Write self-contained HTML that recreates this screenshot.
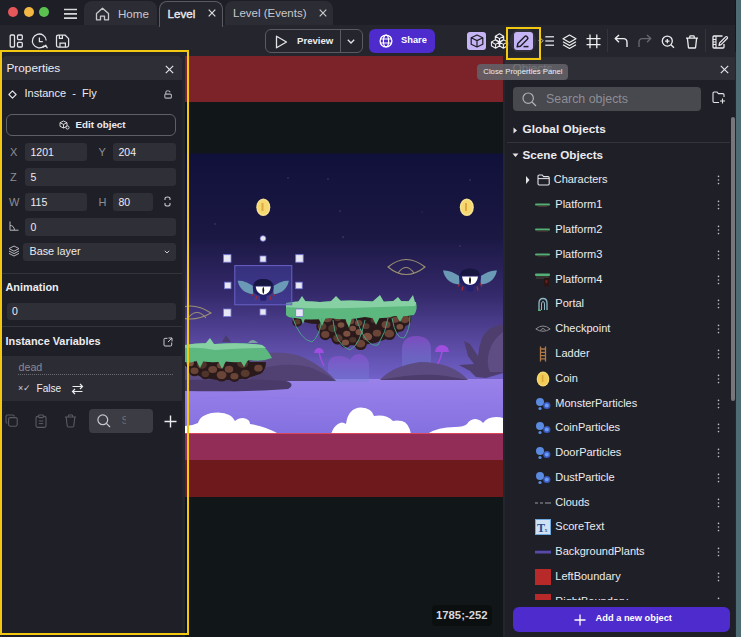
<!DOCTYPE html>
<html><head><meta charset="utf-8">
<style>
*{box-sizing:border-box;margin:0;padding:0}
html,body{width:741px;height:637px;overflow:hidden;background:#1e1e26;font-family:"Liberation Sans",sans-serif;color:#ebebed}
.a{position:absolute}
.t{position:absolute;white-space:pre;line-height:1}
svg{position:absolute;overflow:visible}
</style></head><body>

<!-- tab bar -->
<div class="a" style="left:0;top:0;width:736px;height:25px;background:#1e1e26"></div>
<!-- toolbar -->
<div class="a" style="left:0;top:25px;width:736px;height:32px;background:#25252e"></div>

<!-- traffic lights -->
<div class="a" style="left:8px;top:7px;width:10px;height:10px;border-radius:50%;background:#e5575b"></div>
<div class="a" style="left:23.5px;top:7px;width:10px;height:10px;border-radius:50%;background:#f2b843"></div>
<div class="a" style="left:39px;top:7px;width:10px;height:10px;border-radius:50%;background:#5cc24f"></div>
<!-- hamburger -->
<svg style="left:63px;top:8px" width="15" height="12"><path d="M1 1.5H14M1 5.8H14M1 10.2H14" stroke="#d6d6da" stroke-width="1.7" fill="none"/></svg>
<!-- Home tab -->
<div class="a" style="left:84px;top:1px;width:73px;height:24px;background:#2c2c35;border-radius:8px 8px 0 0"></div>
<svg style="left:95px;top:7px" width="15" height="14" viewBox="0 0 15 14"><path d="M1.5 6.5L7.5 1.2L13.5 6.5V12.8H9.5V9.2H5.5V12.8H1.5Z" stroke="#c8c8cc" stroke-width="1.3" fill="none" stroke-linejoin="round"/></svg>
<div class="t" style="left:118px;top:8px;font-size:11.6px;color:#c8c8cc">Home</div>
<!-- Level tab active -->
<div class="a" style="left:159px;top:1px;width:64px;height:26px;background:#25252e;border:1px solid #5a5a62;border-bottom:none;border-radius:8px 8px 0 0"></div>
<div class="t" style="left:167.5px;top:8px;font-size:11.6px;font-weight:400;-webkit-text-stroke:0.35px #ececef;color:#ececef">Level</div>
<svg style="left:208px;top:9px" width="8" height="8"><path d="M0.7 0.7L7.3 7.3M7.3 0.7L0.7 7.3" stroke="#e0e0e4" stroke-width="1.2"/></svg>
<!-- Level (Events) tab -->
<div class="a" style="left:225px;top:1px;width:108px;height:24px;background:#2c2c35;border-radius:8px 8px 0 0"></div>
<div class="t" style="left:233px;top:8px;font-size:11.5px;color:#c8c8cc">Level (Events)</div>
<svg style="left:318.5px;top:9px" width="8" height="8"><path d="M0.7 0.7L7.3 7.3M7.3 0.7L0.7 7.3" stroke="#c8c8cc" stroke-width="1.2"/></svg>


<!-- left toolbar icons -->
<svg style="left:9px;top:34px" width="15" height="14" viewBox="0 0 15 14"><rect x="1.2" y="1" width="4.3" height="12" rx="1" stroke="#e4e4e8" stroke-width="1.3" fill="none"/><rect x="8.5" y="1" width="4.8" height="4.6" rx="1" stroke="#e4e4e8" stroke-width="1.3" fill="none"/><rect x="8.5" y="8.4" width="4.8" height="4.6" rx="1" stroke="#e4e4e8" stroke-width="1.3" fill="none"/></svg>
<svg style="left:31px;top:32.5px" width="18" height="17" viewBox="0 0 18 17"><path d="M15.2 7.5A6.9 6.9 0 1 0 13.2 12.8" stroke="#e4e4e8" stroke-width="1.25" fill="none"/><path d="M8.4 4.5V8.6H11.8" stroke="#e4e4e8" stroke-width="1.25" fill="none"/><path d="M11.8 14.6L14.8 12.2L16.4 15.2" stroke="#e4e4e8" stroke-width="1.25" fill="none" stroke-linejoin="round"/></svg>
<svg style="left:55px;top:34px" width="15" height="14" viewBox="0 0 15 14"><path d="M1.5 2.8Q1.5 1 3.3 1H10L13.6 4.6V11.2Q13.6 13 11.8 13H3.3Q1.5 13 1.5 11.2Z" stroke="#e4e4e8" stroke-width="1.25" fill="none" stroke-linejoin="round"/><path d="M4.4 1.3V4.4H7.4V1.3" stroke="#e4e4e8" stroke-width="1.2" fill="none"/><path d="M5 13V9.2H10.4V13" stroke="#e4e4e8" stroke-width="1.2" fill="none"/></svg>

<!-- preview button -->
<div class="a" style="left:264.5px;top:28.5px;width:98px;height:24.5px;border:1px solid #5a5a62;border-radius:6px"></div>
<div class="a" style="left:339.5px;top:29px;width:1px;height:24px;background:#5a5a62"></div>
<svg style="left:275px;top:34.5px" width="13" height="14" viewBox="0 0 13 14"><path d="M1.5 1.2L11.5 7L1.5 12.8Z" stroke="#e4e4e8" stroke-width="1.3" fill="none" stroke-linejoin="round"/></svg>
<div class="t" style="left:297px;top:36.3px;font-size:9.6px;font-weight:700;color:#ececef">Preview</div>
<svg style="left:347px;top:39px" width="8" height="5"><path d="M0.8 0.8L4 4L7.2 0.8" stroke="#e4e4e8" stroke-width="1.3" fill="none"/></svg>

<!-- share button -->
<div class="a" style="left:369px;top:29px;width:66px;height:24px;background:#4d2bcc;border-radius:6px"></div>
<svg style="left:378.5px;top:34px" width="14" height="14" viewBox="0 0 14 14"><circle cx="7" cy="7" r="5.9" stroke="#fff" stroke-width="1.3" fill="none"/><ellipse cx="7" cy="7" rx="2.6" ry="5.9" stroke="#fff" stroke-width="1.2" fill="none"/><path d="M1.2 5H12.8M1.2 9H12.8" stroke="#fff" stroke-width="1.1"/></svg>
<div class="t" style="left:401px;top:36.3px;font-size:9.3px;font-weight:700;color:#fff">Share</div>

<!-- right toolbar -->
<div class="a" style="left:467px;top:31.5px;width:19px;height:18.5px;background:#c6b5f5;border-radius:3px"></div>
<svg style="left:469.5px;top:34px" width="14" height="14" viewBox="0 0 14 14"><path d="M7 1L12.8 3.8V10.2L7 13L1.2 10.2V3.8Z M1.2 3.8L7 6.6L12.8 3.8 M7 6.6V13" stroke="#1e1e26" stroke-width="1.2" fill="none" stroke-linejoin="round"/></svg>
<svg style="left:490.5px;top:33px" width="17" height="16" viewBox="0 0 17 16"><path d="M8.5 0.8L12.7 3.2V7.0L8.5 9.4L4.3 7.0V3.2Z M4.3 3.2L8.5 5.6L12.7 3.2 M8.5 5.6V9.4 M4.6 6.6L8.8 9.0V12.799999999999999L4.6 15.2L0.39999999999999947 12.799999999999999V9.0Z M0.39999999999999947 9.0L4.6 11.399999999999999L8.8 9.0 M4.6 11.399999999999999V15.2 M12.4 6.6L16.6 9.0V12.799999999999999L12.4 15.2L8.2 12.799999999999999V9.0Z M8.2 9.0L12.4 11.399999999999999L16.6 9.0 M12.4 11.399999999999999V15.2" stroke="#f0f0f2" stroke-width="1.05" fill="none" stroke-linejoin="round"/></svg>
<div class="a" style="left:510px;top:28px;width:26px;height:26px;border-radius:50%;background:#34343d;opacity:.8"></div>
<div class="a" style="left:513.5px;top:31.5px;width:19px;height:18.5px;background:#c6b5f5;border-radius:3px"></div>
<svg style="left:516px;top:35px" width="14" height="13" viewBox="0 0 14 13"><path d="M1.2 11.8L1.8 8.6L8.8 1.6Q9.8 0.6 10.8 1.6L11.4 2.2Q12.4 3.2 11.4 4.2L4.4 11.2Z" stroke="#1e1e26" stroke-width="1.4" fill="none" stroke-linejoin="round"/><path d="M7.5 11.6H12.5" stroke="#1e1e26" stroke-width="1.5"/></svg>
<svg style="left:538px;top:35px" width="17" height="12" viewBox="0 0 17 12"><path d="M3 3.7L5 5.7L3 7.7L1 5.7Z" stroke="#d0d0d4" stroke-width="1" fill="none"/><path d="M7.3 1.8H16M7.3 5.9H16M7.3 10.2H16" stroke="#c8c8cc" stroke-width="1.5"/></svg>
<svg style="left:562px;top:33.5px" width="15" height="15" viewBox="0 0 15 15"><path d="M7.5 1L14 4.7L7.5 8.4L1 4.7Z" stroke="#f0f0f2" stroke-width="1.2" fill="none" stroke-linejoin="round"/><path d="M1 7.8L7.5 11.5L14 7.8M1 10.8L7.5 14.5L14 10.8" stroke="#f0f0f2" stroke-width="1.2" fill="none" stroke-linejoin="round"/></svg>
<svg style="left:585.5px;top:33.5px" width="15" height="15" viewBox="0 0 15 15"><path d="M4 0.5V14.3M10.8 0.5V14.3M0.5 4.6H14.5M0.5 10.6H14.5" stroke="#f0f0f2" stroke-width="1.3"/></svg>
<div class="a" style="left:606.5px;top:29px;width:1px;height:24px;background:#34343d"></div>
<svg style="left:614px;top:34px" width="15" height="14" viewBox="0 0 15 14"><path d="M5 1L1.2 4.6L5 8.2M1.5 4.6H9.5Q13 4.6 13 8.5V13" stroke="#ececef" stroke-width="1.4" fill="none" stroke-linejoin="round"/></svg>
<svg style="left:637px;top:34px" width="15" height="14" viewBox="0 0 15 14"><path d="M10 1L13.8 4.6L10 8.2M13.5 4.6H5.5Q2 4.6 2 8.5V13" stroke="#66666c" stroke-width="1.4" fill="none" stroke-linejoin="round"/></svg>
<svg style="left:661px;top:34.5px" width="14" height="14" viewBox="0 0 14 14"><circle cx="6.3" cy="6.1" r="5" stroke="#ececef" stroke-width="1.3" fill="none"/><path d="M9.9 9.7L13 12.8M6.3 3.9V8.3M4.1 6.1H8.5" stroke="#ececef" stroke-width="1.3"/></svg>
<svg style="left:684.5px;top:34.5px" width="14" height="14" viewBox="0 0 14 14"><path d="M1 3.2H13M4.8 3V1.6Q4.8 0.8 5.6 0.8H8.4Q9.2 0.8 9.2 1.6V3M2.4 3.4L3.4 12.3Q3.5 13 4.2 13H9.8Q10.5 13 10.6 12.3L11.6 3.4" stroke="#ececef" stroke-width="1.3" fill="none" stroke-linejoin="round"/></svg>
<div class="a" style="left:705px;top:29px;width:1px;height:24px;background:#34343d"></div>
<svg style="left:712px;top:34.5px" width="17" height="14" viewBox="0 0 17 14"><path d="M10.5 1H2Q1 1 1 2V12Q1 13 2 13H11Q12 13 12 12V9" stroke="#ececef" stroke-width="1.3" fill="none"/><path d="M4 1V13M1 4.5H4M1 7H4M1 9.5H4" stroke="#ececef" stroke-width="1.1"/><path d="M7 10.5L7.5 8L13.6 1.9Q14.4 1.1 15.2 1.9Q16 2.7 15.2 3.5L9.1 9.6Z" stroke="#ececef" stroke-width="1.2" fill="none" stroke-linejoin="round"/></svg>

<!-- teal strip -->
<div class="a" style="left:735px;top:0;width:1px;height:637px;background:#17171d"></div>
<div class="a" style="left:736px;top:0;width:5px;height:637px;background:#4e6a73"></div>

<!-- LEFT PANEL -->
<div class="a" style="left:0;top:52px;width:187px;height:585px;background:#25252e"></div>
<div class="a" style="left:2px;top:56px;width:180px;height:581px;background:#1f1f28"></div>
<div class="a" style="left:2px;top:56px;width:180px;height:23.5px;background:#2e2e37;border-radius:4px 4px 0 0"></div>
<div class="t" style="left:6.5px;top:62.5px;font-size:11.8px;color:#ececef">Properties</div>
<svg style="left:165px;top:64.5px" width="9" height="9"><path d="M0.8 0.8L8.2 8.2M8.2 0.8L0.8 8.2" stroke="#e4e4e8" stroke-width="1.2"/></svg>

<svg style="left:7.5px;top:89.5px" width="9" height="9" viewBox="0 0 9 9"><path d="M4.5 0.9L8.1 4.5L4.5 8.1L0.9 4.5Z" stroke="#e4e4e8" stroke-width="1.1" fill="none" stroke-linejoin="round"/></svg>
<div class="t" style="left:24.5px;top:88px;font-size:11px;color:#ececef">Instance  -  Fly</div>
<svg style="left:163.5px;top:89.5px" width="9" height="9" viewBox="0 0 9 9"><path d="M1.8 4V2.6Q1.8 0.8 3.8 0.8Q5.6 0.8 6.2 2.2" stroke="#b0b0b5" stroke-width="1.1" fill="none"/><rect x="0.8" y="4.1" width="6.6" height="4" rx="1" stroke="#b0b0b5" stroke-width="1.1" fill="none"/></svg>

<div class="a" style="left:6px;top:113.5px;width:170px;height:22.5px;border:1px solid #5f5f67;border-radius:6px"></div>
<svg style="left:58.5px;top:120px" width="11" height="10" viewBox="0 0 11 10"><path d="M4.5 1L8 2.7V6.3L4.5 8L1 6.3V2.7Z M1 2.7L4.5 4.4L8 2.7 M4.5 4.4V8" stroke="#e4e4e8" stroke-width="0.9" fill="none"/><circle cx="8.5" cy="7.5" r="1.6" stroke="#e4e4e8" stroke-width="0.9" fill="#1f1f28"/></svg>
<div class="t" style="left:75.5px;top:120px;font-size:9.8px;font-weight:700;color:#ececef">Edit object</div>

<!-- fields -->
<div class="t" style="left:10px;top:147px;font-size:11px;color:#8e8e94">X</div>
<div class="a" style="left:25px;top:143px;width:62px;height:17.5px;background:#2f2f38;border-radius:3px"></div>
<div class="t" style="left:30.5px;top:146.5px;font-size:10.5px;color:#ececef">1201</div>
<div class="t" style="left:98.5px;top:147px;font-size:11px;color:#8e8e94">Y</div>
<div class="a" style="left:112.5px;top:143px;width:63px;height:17.5px;background:#2f2f38;border-radius:3px"></div>
<div class="t" style="left:118.5px;top:146.5px;font-size:10.5px;color:#ececef">204</div>

<div class="t" style="left:10px;top:172px;font-size:11px;color:#8e8e94">Z</div>
<div class="a" style="left:25px;top:168px;width:150.5px;height:17.5px;background:#2f2f38;border-radius:3px"></div>
<div class="t" style="left:30.5px;top:171.5px;font-size:10.5px;color:#ececef">5</div>

<div class="t" style="left:9px;top:197px;font-size:11px;color:#8e8e94">W</div>
<div class="a" style="left:25px;top:193px;width:62px;height:17.5px;background:#2f2f38;border-radius:3px"></div>
<div class="t" style="left:30.5px;top:196.5px;font-size:10.5px;color:#ececef">115</div>
<div class="t" style="left:98.5px;top:197px;font-size:11px;color:#8e8e94">H</div>
<div class="a" style="left:112.5px;top:193px;width:40.5px;height:17.5px;background:#2f2f38;border-radius:3px"></div>
<div class="t" style="left:118.5px;top:196.5px;font-size:10.5px;color:#ececef">80</div>
<svg style="left:164px;top:196px" width="7" height="11" viewBox="0 0 7 11"><path d="M1 4V2.5Q1 1 3.5 1Q6 1 6 2.5V4M1 7V8.5Q1 10 3.5 10Q6 10 6 8.5V7" stroke="#c8c8cc" stroke-width="1.1" fill="none"/></svg>

<svg style="left:9px;top:221px" width="10" height="10" viewBox="0 0 10 10"><path d="M1 0.5V9.2H9.5M1 4.5Q5 4.5 5.5 9.2" stroke="#b8b8bd" stroke-width="1" fill="none"/></svg>
<div class="a" style="left:25px;top:218px;width:150.5px;height:17.5px;background:#2f2f38;border-radius:3px"></div>
<div class="t" style="left:30.5px;top:221.5px;font-size:10.5px;color:#ececef">0</div>

<svg style="left:7.5px;top:245px" width="12" height="12" viewBox="0 0 12 12"><path d="M6 1L11 3.6L6 6.2L1 3.6Z" stroke="#b8b8bd" stroke-width="1" fill="none" stroke-linejoin="round"/><path d="M1 6L6 8.6L11 6M1 8.4L6 11L11 8.4" stroke="#b8b8bd" stroke-width="1" fill="none" stroke-linejoin="round"/></svg>
<div class="a" style="left:23px;top:242.5px;width:152.5px;height:18px;background:#2f2f38;border-radius:3px"></div>
<div class="t" style="left:29.5px;top:246px;font-size:10.8px;color:#ececef">Base layer</div>
<svg style="left:163.5px;top:250px" width="6" height="4"><path d="M0.8 0.8L3 3L5.2 0.8" stroke="#c8c8cc" stroke-width="1" fill="none"/></svg>

<div class="a" style="left:2px;top:272.5px;width:180px;height:1px;background:#34343d"></div>
<div class="t" style="left:5.5px;top:282px;font-size:10.9px;font-weight:700;color:#ececef">Animation</div>
<div class="a" style="left:6.5px;top:302.5px;width:169px;height:17.5px;background:#2f2f38;border-radius:3px"></div>
<div class="t" style="left:12px;top:305.5px;font-size:10.5px;color:#ececef">0</div>
<div class="a" style="left:2px;top:326px;width:180px;height:1px;background:#34343d"></div>
<div class="t" style="left:5.5px;top:336px;font-size:10.9px;font-weight:700;color:#ececef">Instance Variables</div>
<svg style="left:162.5px;top:336.5px" width="10" height="10" viewBox="0 0 10 10"><path d="M4.5 1.3H2Q1 1.3 1 2.3V8Q1 9 2 9H7.7Q8.7 9 8.7 8V5.5M5.5 1H9V4.5M9 1L5 5" stroke="#c8c8cc" stroke-width="1" fill="none"/></svg>

<div class="a" style="left:2px;top:355.5px;width:180px;height:45.5px;background:#2c2c35"></div>
<div class="t" style="left:18.5px;top:361.5px;font-size:10.7px;color:#8a8a90">dead</div>
<div class="a" style="left:18px;top:373.5px;width:155px;height:0;border-top:1px dotted #6a6a70"></div>
<div class="t" style="left:18px;top:384px;font-size:9px;color:#d0d0d4">×✓</div>
<div class="t" style="left:36.5px;top:383.5px;font-size:10.1px;color:#ececef">False</div>
<svg style="left:71px;top:383px" width="13" height="12" viewBox="0 0 13 12"><path d="M1.5 3.5H11.5M9 1L11.5 3.5L9 6M11.5 8.5H1.5M4 6L1.5 8.5L4 11" stroke="#ececef" stroke-width="1.2" fill="none"/></svg>

<!-- bottom toolbar -->
<svg style="left:5px;top:414px" width="13" height="13" viewBox="0 0 13 13"><rect x="3.6" y="3.6" width="8.6" height="8.6" rx="1.6" stroke="#5a5a62" stroke-width="1.1" fill="none"/><path d="M2.4 9.2Q1 9.2 1 7.8V2.4Q1 1 2.4 1H7.8Q9.2 1 9.2 2.4" stroke="#5a5a62" stroke-width="1.1" fill="none"/></svg>
<svg style="left:35px;top:413.5px" width="12" height="14" viewBox="0 0 12 14"><rect x="1" y="2.4" width="10" height="11" rx="1.6" stroke="#5a5a62" stroke-width="1.1" fill="none"/><rect x="3.6" y="1" width="4.8" height="2.6" rx="0.8" stroke="#5a5a62" stroke-width="1.1" fill="#1f1f28"/><path d="M3.8 7H8.2M3.8 9.6H8.2" stroke="#5a5a62" stroke-width="1"/></svg>
<svg style="left:64px;top:413.5px" width="13" height="14" viewBox="0 0 13 14"><path d="M1 3H12M4.4 2.8V1.8Q4.4 1 5.2 1H7.8Q8.6 1 8.6 1.8V2.8M2.2 3.4L3.2 12Q3.3 13 4.2 13H8.8Q9.7 13 9.8 12L10.8 3.4" stroke="#5a5a62" stroke-width="1.1" fill="none"/></svg>
<div class="a" style="left:88.5px;top:408.5px;width:64px;height:24.5px;background:#3c3c45;border-radius:4px"></div>
<svg style="left:97px;top:414px" width="14" height="14" viewBox="0 0 14 14"><circle cx="5.8" cy="5.8" r="4.9" stroke="#c8c8cc" stroke-width="1.2" fill="none"/><path d="M9.4 9.4L13 13" stroke="#c8c8cc" stroke-width="1.2"/></svg>
<div class="a" style="left:121.5px;top:414.5px;width:4px;height:12px;overflow:hidden"><div class="t" style="left:0;top:0;font-size:11px;color:#6e6e74">S</div></div>
<svg style="left:164px;top:414.5px" width="13" height="13"><path d="M6.5 0.5V12.5M0.5 6.5H12.5" stroke="#ececef" stroke-width="1.4"/></svg>

<!-- CANVAS -->
<div class="a" style="left:185px;top:56px;width:318px;height:581px;background:#111719;overflow:hidden">
<svg style="left:0;top:0" width="318" height="581" viewBox="185 56 318 581">
<defs>
<linearGradient id="sky" x1="0" y1="153.5" x2="0" y2="434" gradientUnits="userSpaceOnUse">
<stop offset="0" stop-color="#10113a"/>
<stop offset="0.3" stop-color="#1b1844"/>
<stop offset="0.5" stop-color="#34296a"/>
<stop offset="0.68" stop-color="#5a4aa2"/>
<stop offset="0.8" stop-color="#7060c8"/>
<stop offset="1" stop-color="#8272e4"/>
</linearGradient>
<radialGradient id="mush" cx="0.5" cy="0.4" r="0.6"><stop offset="0" stop-color="#9a6ae8" stop-opacity=".9"/><stop offset="1" stop-color="#7a5ad0" stop-opacity=".5"/></radialGradient>
</defs>
<rect x="185" y="56" width="318" height="46" fill="#7b2329"/>
<rect x="185" y="153.5" width="318" height="281" fill="url(#sky)"/>
<!-- stars -->
<g fill="#4a4a7a"><circle cx="288" cy="178" r=".7"/><circle cx="328" cy="179" r=".7"/><circle cx="340" cy="211" r=".7"/><circle cx="215" cy="224" r=".7"/><circle cx="343" cy="237" r=".8"/><circle cx="460" cy="246" r=".7"/><circle cx="470" cy="180" r=".7"/><circle cx="422" cy="212" r=".6"/></g>
<linearGradient id="gnd" x1="0" y1="0" x2="0" y2="1"><stop offset="0" stop-color="#9a82ea"/><stop offset="1" stop-color="#8470e0"/></linearGradient>
<rect x="185" y="379" width="318" height="55" fill="url(#gnd)"/>
<!-- mushrooms glow -->
<linearGradient id="dome" x1="0" y1="0" x2="0" y2="1"><stop offset="0" stop-color="#a452e2"/><stop offset=".35" stop-color="#8a68dc"/><stop offset="1" stop-color="#6e86d2" stop-opacity=".7"/></linearGradient>
<path d="M402 366V350Q402 336 416 336Q431 336 431 350V366Z" fill="url(#dome)" opacity=".5"/>
<path d="M435 352Q436 345 442 345Q449 346 449 352Z" fill="#a04ee0"/><path d="M442 351Q441 360 436 366" stroke="#a04ee0" stroke-width="1.6" fill="none"/>
<path d="M328 382V366Q328 356 338 356Q346 356 350 360Q354 353 360 354Q369 356 369 366V382Z" fill="url(#dome)" opacity=".45"/>
<path d="M314 353Q315 348 319 348Q323 348 324 353Z" fill="#a04ee0"/><path d="M319 352Q320 358 324 366" stroke="#a04ee0" stroke-width="1.5" fill="none"/>
<!-- hills -->
<path d="M185 381V368Q220 356 262 353Q290 351 305 358Q325 368 336 381Z" fill="#5c4b80"/>
<path d="M250 372Q285 360 312 368Q328 375 336 381H250Z" fill="#514173"/>
<path d="M185 380Q240 378 286 381Q296 384 288 389Q250 392 185 391Z" fill="#4a3a6a"/>
<path d="M380 380Q392 366 420 362Q452 362 468 380Z" fill="#5c4b80"/>
<path d="M380 380Q420 372 446 376Q458 378 468 380Z" fill="#4c3c6c"/>
<path d="M503 324Q488 326 482 338Q479 346 478 356L470 344L464 341L468 356L474 364L459 365L470 371L476 377L486 378L503 373Z" fill="#4e3e6e"/>
<path d="M503 332Q492 340 489 352Q486 364 490 372H503Z" fill="#5e4d82"/>
<!-- lower ground -->

<path d="M200 398Q260 395 320 400M360 405Q420 400 490 404M210 415Q300 412 380 418" stroke="#8c7ce8" stroke-width="1" fill="none" opacity=".6"/>
<!-- clouds -->
<g fill="#ffffff">
<path d="M185 434V426Q192 426 198 423Q201 413 218 412.5Q232 413 235 421Q238 418 243 418Q250 419 250 424Q265 426 279 434Z"/>
<path d="M331 434Q334 426 338 424Q342 421 346 424Q348 408 361 407.5Q372 408 374 416Q386 414 393 421Q396 420 402 421Q409 423 411 434Z"/>
<path d="M427 434Q438 427 455 427Q464 427 467 424Q470 419 476 419Q481 420 483 423Q487 417 496 417Q501 417 503 418V434Z"/>
</g>
<rect x="185" y="433" width="318" height="1.2" fill="#d9475a"/>
<rect x="185" y="434" width="318" height="26" fill="#912d57"/>
<rect x="185" y="460" width="318" height="37" fill="#6e1a1d"/>
<!-- checkpoint eyes -->
<path d="M388 267Q406 252 425 267Q406 282 388 267Z" stroke="#9a9070" stroke-width="1.1" fill="none"/>
<path d="M398 273Q406 262 414 273" stroke="#9a9070" stroke-width="1.1" fill="none"/>
<path d="M170 313Q190 299 211 313Q190 325 170 313Z" stroke="#9a9070" stroke-width="1.1" fill="none"/>
<path d="M188 318Q197 307 206 318" stroke="#9a9070" stroke-width="1.1" fill="none"/>
<!-- left platform -->
<path d="M189 362H266Q266 370 260 374Q244 380 225 380Q205 380 195 374Q189 370 189 362Z" fill="#2a1a1c"/>
<g fill="#2a1a1c"><circle cx="212.7" cy="369.5" r="6.0"/><circle cx="201.8" cy="364.6" r="6.7"/><circle cx="229.0" cy="369.2" r="5.9"/><circle cx="242.7" cy="363.4" r="7.1"/><circle cx="258.4" cy="368.2" r="5.8"/><circle cx="245.2" cy="373.3" r="6.0"/><circle cx="190.1" cy="363.2" r="5.4"/><circle cx="221.6" cy="375.1" r="6.5"/><circle cx="220.6" cy="365.4" r="5.3"/><circle cx="234.4" cy="376.3" r="5.6"/><circle cx="205.3" cy="373.9" r="5.4"/><circle cx="194.5" cy="370.7" r="5.6"/></g><g><ellipse cx="212.7" cy="369.5" rx="4.4" ry="3.6" fill="#6a4436"/><ellipse cx="201.8" cy="364.6" rx="5.1" ry="4.2" fill="#4e342a"/><ellipse cx="229.0" cy="369.2" rx="4.3" ry="3.5" fill="#6a4436"/><ellipse cx="242.7" cy="363.4" rx="5.5" ry="4.5" fill="#4e342a"/><ellipse cx="258.4" cy="368.2" rx="4.2" ry="3.4" fill="#6a4436"/><ellipse cx="245.2" cy="373.3" rx="4.4" ry="3.6" fill="#583a2e"/><ellipse cx="190.1" cy="363.2" rx="3.8" ry="3.1" fill="#7a5040"/><ellipse cx="221.6" cy="375.1" rx="4.9" ry="4.0" fill="#6a4436"/><ellipse cx="220.6" cy="365.4" rx="3.7" ry="3.0" fill="#6a4436"/><ellipse cx="234.4" cy="376.3" rx="4.0" ry="3.2" fill="#6a4436"/><ellipse cx="205.3" cy="373.9" rx="3.8" ry="3.1" fill="#4e342a"/><ellipse cx="194.5" cy="370.7" rx="4.0" ry="3.3" fill="#6a4436"/></g>
<path d="M185 345Q200 342 215 344Q240 342 262 345Q268 350 272 358Q262 362 250 360Q238 364 225 361Q210 364 198 360Q190 364 185 362Z" fill="#5cb87e"/>
<path d="M185 345Q200 342 215 344Q240 342 262 345Q265 347 266 348Q240 348 215 350Q200 347 185 348Z" fill="#86d0a4"/><path d="M205 344L210 338L214 344" fill="#86d0a4"/>
<path d="M196 360L200 368L204 360M218 361L222 369L226 361M240 360L244 367L248 360" fill="#5cb87e"/>
<path d="M222 342L226 335L231 342Z" fill="#4a3d6e"/>
<path d="M248 343Q252 337 258 343Z" fill="#7aa0a0"/>
<!-- floating platform -->
<path d="M292 312L412 312Q412 320 404 328Q392 338 375 343Q360 346 348 345Q335 342 326 335Q321 327 318 324Q305 324 296 318Z" fill="#2a1a1c"/>
<g fill="#2a1a1c"><circle cx="367.4" cy="336.7" r="6.4"/><circle cx="350.0" cy="320.9" r="5.9"/><circle cx="361.9" cy="313.4" r="5.2"/><circle cx="395.5" cy="319.7" r="5.2"/><circle cx="337.8" cy="318.3" r="5.1"/><circle cx="332.7" cy="328.4" r="6.2"/><circle cx="386.0" cy="324.7" r="6.0"/><circle cx="298.0" cy="314.5" r="5.2"/><circle cx="404.9" cy="319.3" r="6.3"/><circle cx="358.6" cy="323.0" r="5.4"/><circle cx="317.1" cy="315.5" r="5.1"/><circle cx="352.8" cy="339.8" r="5.1"/><circle cx="337.8" cy="338.2" r="6.3"/><circle cx="325.3" cy="334.5" r="5.7"/><circle cx="389.3" cy="333.7" r="6.4"/><circle cx="378.4" cy="313.9" r="5.1"/><circle cx="346.8" cy="333.8" r="5.2"/><circle cx="327.2" cy="318.0" r="6.8"/><circle cx="377.0" cy="333.2" r="5.8"/><circle cx="388.7" cy="315.2" r="5.3"/><circle cx="366.0" cy="326.2" r="5.1"/><circle cx="374.0" cy="320.1" r="5.0"/><circle cx="307.6" cy="315.3" r="6.6"/><circle cx="359.3" cy="332.1" r="5.4"/><circle cx="399.8" cy="326.8" r="5.0"/><circle cx="341.0" cy="325.0" r="5.0"/><circle cx="322.1" cy="326.5" r="5.8"/><circle cx="360.6" cy="343.7" r="6.3"/><circle cx="297.2" cy="321.9" r="4.9"/><circle cx="370.5" cy="313.2" r="5.2"/><circle cx="346.3" cy="313.8" r="4.9"/><circle cx="345.4" cy="342.5" r="5.3"/><circle cx="399.1" cy="313.1" r="5.1"/><circle cx="353.8" cy="313.1" r="5.0"/><circle cx="352.7" cy="328.5" r="4.9"/></g><g><ellipse cx="367.4" cy="336.7" rx="4.8" ry="3.9" fill="#7a5040"/><ellipse cx="350.0" cy="320.9" rx="4.3" ry="3.5" fill="#6a4436"/><ellipse cx="361.9" cy="313.4" rx="3.6" ry="3.0" fill="#583a2e"/><ellipse cx="395.5" cy="319.7" rx="3.6" ry="3.0" fill="#6a4436"/><ellipse cx="337.8" cy="318.3" rx="3.5" ry="2.9" fill="#583a2e"/><ellipse cx="332.7" cy="328.4" rx="4.6" ry="3.8" fill="#4e342a"/><ellipse cx="386.0" cy="324.7" rx="4.4" ry="3.6" fill="#6a4436"/><ellipse cx="298.0" cy="314.5" rx="3.6" ry="2.9" fill="#7a5040"/><ellipse cx="404.9" cy="319.3" rx="4.7" ry="3.9" fill="#6a4436"/><ellipse cx="358.6" cy="323.0" rx="3.8" ry="3.1" fill="#6a4436"/><ellipse cx="317.1" cy="315.5" rx="3.5" ry="2.9" fill="#7a5040"/><ellipse cx="352.8" cy="339.8" rx="3.5" ry="2.8" fill="#4e342a"/><ellipse cx="337.8" cy="338.2" rx="4.7" ry="3.9" fill="#583a2e"/><ellipse cx="325.3" cy="334.5" rx="4.1" ry="3.4" fill="#6a4436"/><ellipse cx="389.3" cy="333.7" rx="4.8" ry="3.9" fill="#6a4436"/><ellipse cx="378.4" cy="313.9" rx="3.5" ry="2.9" fill="#583a2e"/><ellipse cx="346.8" cy="333.8" rx="3.6" ry="3.0" fill="#7a5040"/><ellipse cx="327.2" cy="318.0" rx="5.2" ry="4.2" fill="#6a4436"/><ellipse cx="377.0" cy="333.2" rx="4.2" ry="3.4" fill="#6a4436"/><ellipse cx="388.7" cy="315.2" rx="3.7" ry="3.0" fill="#6a4436"/><ellipse cx="366.0" cy="326.2" rx="3.5" ry="2.9" fill="#583a2e"/><ellipse cx="374.0" cy="320.1" rx="3.4" ry="2.8" fill="#4e342a"/><ellipse cx="307.6" cy="315.3" rx="5.0" ry="4.1" fill="#583a2e"/><ellipse cx="359.3" cy="332.1" rx="3.8" ry="3.1" fill="#7a5040"/><ellipse cx="399.8" cy="326.8" rx="3.4" ry="2.8" fill="#7a5040"/><ellipse cx="341.0" cy="325.0" rx="3.4" ry="2.8" fill="#7a5040"/><ellipse cx="322.1" cy="326.5" rx="4.2" ry="3.4" fill="#583a2e"/><ellipse cx="360.6" cy="343.7" rx="4.7" ry="3.9" fill="#6a4436"/><ellipse cx="297.2" cy="321.9" rx="3.3" ry="2.7" fill="#583a2e"/><ellipse cx="370.5" cy="313.2" rx="3.6" ry="3.0" fill="#4e342a"/><ellipse cx="346.3" cy="313.8" rx="3.3" ry="2.7" fill="#6a4436"/><ellipse cx="345.4" cy="342.5" rx="3.7" ry="3.0" fill="#7a5040"/><ellipse cx="399.1" cy="313.1" rx="3.5" ry="2.8" fill="#7a5040"/><ellipse cx="353.8" cy="313.1" rx="3.4" ry="2.8" fill="#4e342a"/><ellipse cx="352.7" cy="328.5" rx="3.3" ry="2.7" fill="#7a5040"/></g>
<path d="M286 303Q300 300 320 302Q350 299 380 302Q400 300 416 302Q418 310 414 315Q404 317 395 316Q380 320 365 317Q345 321 330 318Q310 321 295 318Q288 318 286 315Z" fill="#5cb87e"/>
<path d="M286 303Q300 300 320 302Q350 299 380 302Q400 300 416 302Q416 305 415 306Q380 307 350 308Q310 309 286 307Z" fill="#86d0a4"/><path d="M298 302L302 296L306 302M330 302L336 296L342 302M372 302L380 295L384 302M392 302L398 297L402 302M408 302L413 295L415 302" fill="#86d0a4"/>
<path d="M300 316L303 324L306 316M318 317L322 326L326 317M345 318L349 328L352 318M372 317L376 325L380 317M396 315L400 322L404 315" fill="#5cb87e"/>
<g stroke="#4aa88a" stroke-width="1" fill="none" opacity=".9"><path d="M292 316Q300 340 312 342Q320 336 322 318"/><path d="M333 320Q335 345 350 350Q360 345 365 320"/><path d="M356 318Q366 348 378 345Q386 332 388 318"/><path d="M392 318Q396 340 404 338Q410 330 410 316"/></g>
<!-- coins -->
<g><ellipse cx="263.3" cy="207.2" rx="7" ry="8.8" fill="#f8e18e"/><ellipse cx="263.3" cy="207.2" rx="5.5" ry="7.2" fill="#f5d870"/><rect x="261.5" y="203" width="2" height="8" fill="#e0a840"/></g>
<g><ellipse cx="466.8" cy="207.2" rx="7" ry="8.8" fill="#f8e18e"/><ellipse cx="466.8" cy="207.2" rx="5.5" ry="7.2" fill="#f5d870"/><rect x="465" y="203" width="2" height="8" fill="#e0a840"/></g>
<!-- right monster -->
<g transform="translate(470 277.5) scale(1.0)">
<path d="M-10 -1Q-20 -8 -27 -7Q-24 6 -11 7Z" fill="#6a9ab6"/><path d="M10 -1Q20 -8 27 -7Q24 6 11 7Z" fill="#6a9ab6"/>
<path d="M-11 0Q-11 -9 0 -9Q11 -9 11 0Q11 9 0 9Q-11 9 -11 0Z" fill="#221e62"/>
<path d="M-10 -2Q-9 -9 0 -9Q9 -9 10 -2Z" fill="#17163e"/>
<rect x="-3.5" y="7" width="7" height="7" rx="3" fill="#252070"/>
<path d="M-8 -1H8Q7 7 0 7.5Q-7 7 -8 -1Z" fill="#fff"/>
<path d="M0 -1Q-2 3 0 7Q2 3 0 -1Z" fill="#111"/>
<path d="M-10 6L-12 9M-7 9L-8 13M10 6L12 9M7 9L8 13" stroke="#a62a3a" stroke-width="1.2"/>
</g>

<!-- selection -->
<rect x="234.8" y="265.6" width="57" height="39.2" fill="#4a48b0" fill-opacity=".45" stroke="#6a62c8" stroke-width="1"/>
<g transform="translate(263.3 287.5) scale(0.95)">
<path d="M-10 -1Q-20 -8 -27 -7Q-24 6 -11 7Z" fill="#6a9ab6"/><path d="M10 -1Q20 -8 27 -7Q24 6 11 7Z" fill="#6a9ab6"/>
<path d="M-11 0Q-11 -9 0 -9Q11 -9 11 0Q11 9 0 9Q-11 9 -11 0Z" fill="#221e62"/>
<path d="M-10 -2Q-9 -9 0 -9Q9 -9 10 -2Z" fill="#17163e"/>
<rect x="-3.5" y="7" width="7" height="7" rx="3" fill="#252070"/>
<path d="M-8 -1H8Q7 7 0 7.5Q-7 7 -8 -1Z" fill="#fff"/>
<path d="M0 -1Q-2 3 0 7Q2 3 0 -1Z" fill="#111"/>
<path d="M-10 6L-12 9M-7 9L-8 13M10 6L12 9M7 9L8 13" stroke="#a62a3a" stroke-width="1.2"/>
</g>
<g fill="#e8e8f4" stroke="#7a7ad8" stroke-width=".8">
<circle cx="263" cy="238.5" r="2.8"/>
<rect x="223.5" y="254.7" width="7.5" height="7.5"/><rect x="260" y="256" width="6" height="6"/><rect x="295.7" y="254.7" width="7.5" height="7.5"/>
<rect x="224.5" y="282.2" width="6.5" height="6.5"/><rect x="295.7" y="282.2" width="6.5" height="6.5"/>
<rect x="223.5" y="309" width="7.5" height="7.5"/><rect x="260" y="309" width="6" height="6"/><rect x="295.7" y="309" width="7.5" height="7.5"/>
</g>
</svg>
<div class="a" style="left:246.7px;top:549px;width:60px;height:21px;background:#0c0f10;border-radius:4px"></div>
<div class="t" style="left:251px;top:553.5px;font-size:11.3px;font-weight:700;color:#d8d8dc">1785;-252</div>
</div>

<!-- RIGHT PANEL -->
<div class="a" style="left:503px;top:52px;width:233px;height:585px;background:#25252e"></div>
<div class="a" style="left:504.5px;top:57px;width:230.5px;height:580px;background:#1f1f28"></div>
<div class="a" style="left:504.5px;top:57px;width:230.5px;height:22.5px;background:#2e2e37;border-radius:3px 1px 0 0"></div>
<div class="t" style="left:512.5px;top:63px;font-size:11.8px;color:#ececef">Objects</div>
<svg style="left:719.5px;top:65px" width="9" height="9"><path d="M0.8 0.8L8.2 8.2M8.2 0.8L0.8 8.2" stroke="#e4e4e8" stroke-width="1.2"/></svg>
<div class="a" style="left:513px;top:86.5px;width:187.5px;height:24.5px;background:#48484f;border-radius:4px"></div>
<svg style="left:521.5px;top:91.5px" width="15" height="15" viewBox="0 0 15 15"><circle cx="6.2" cy="6.2" r="5.2" stroke="#b0b0b5" stroke-width="1.2" fill="none"/><path d="M10 10L14 14" stroke="#b0b0b5" stroke-width="1.2"/></svg>
<div class="t" style="left:546px;top:92.5px;font-size:12.4px;color:#8e8e94">Search objects</div>
<svg style="left:712px;top:91px" width="14" height="13" viewBox="0 0 14 13"><path d="M7 11.5H2.2Q1 11.5 1 10.3V2.2Q1 1 2.2 1H5L6.4 2.6H10.8Q12 2.6 12 3.8V6" stroke="#e4e4e8" stroke-width="1.1" fill="none"/><path d="M10.5 7.5V12.5M8 10H13" stroke="#e4e4e8" stroke-width="1.1"/></svg>

<svg style="left:512.5px;top:126.5px" width="5" height="7"><path d="M0.5 0.5L4 3.5L0.5 6.5Z" fill="#e4e4e8"/></svg>
<div class="t" style="left:522.5px;top:124px;font-size:11.8px;font-weight:700;color:#ececef">Global Objects</div>
<div class="a" style="left:506.5px;top:142px;width:223px;height:1px;background:#34343d"></div>
<svg style="left:511.5px;top:153px" width="7" height="5"><path d="M0.5 0.5H6.5L3.5 4Z" fill="#e4e4e8"/></svg>
<div class="t" style="left:522.5px;top:149px;font-size:11.7px;font-weight:700;color:#ececef">Scene Objects</div>
<div class="a" style="left:731px;top:117px;width:4px;height:283.5px;background:#76767b;border-radius:2px"></div>
<div class="a" style="left:505px;top:169px;width:226px;height:431px;overflow:hidden">
<svg style="left:19.5px;top:5.3px" width="26" height="12" viewBox="0 0 26 12"><path d="M1 2L4.5 6L1 10Z" fill="#e4e4e8"/><path d="M13 2.2Q13 1 14.2 1H17.2L18.6 2.6H23Q24.2 2.6 24.2 3.8V9.8Q24.2 11 23 11H14.2Q13 11 13 9.8Z" stroke="#e4e4e8" stroke-width="1.1" fill="none"/><path d="M13 4.6H24.2" stroke="#e4e4e8" stroke-width="1"/></svg>
<div class="t" style="left:48.7px;top:5.3px;font-size:11px;color:#ececef">Characters</div>
<svg style="left:211.7px;top:6.3px" width="3" height="10"><circle cx="1.5" cy="1.4" r="0.8" fill="#c0c0c4"/><circle cx="1.5" cy="5" r="0.8" fill="#c0c0c4"/><circle cx="1.5" cy="8.6" r="0.8" fill="#c0c0c4"/></svg>
<svg style="left:29.0px;top:30.3px" width="17" height="12"><rect x="1" y="4.6" width="15" height="2" rx="1" fill="#52b074"/><rect x="4" y="6.6" width="9" height="1.4" fill="#5a4036" opacity=".7"/></svg>
<div class="t" style="left:50.3px;top:30.3px;font-size:11px;color:#ececef">Platform1</div>
<svg style="left:211.7px;top:31.3px" width="3" height="10"><circle cx="1.5" cy="1.4" r="0.8" fill="#c0c0c4"/><circle cx="1.5" cy="5" r="0.8" fill="#c0c0c4"/><circle cx="1.5" cy="8.6" r="0.8" fill="#c0c0c4"/></svg>
<svg style="left:29.0px;top:55.1px" width="17" height="12"><rect x="1" y="4.6" width="15" height="1.8" rx="1" fill="#52b074"/><rect x="3" y="6.4" width="11" height="1.6" fill="#4a3630" opacity=".7"/></svg>
<div class="t" style="left:50.3px;top:55.1px;font-size:11px;color:#ececef">Platform2</div>
<svg style="left:211.7px;top:56.1px" width="3" height="10"><circle cx="1.5" cy="1.4" r="0.8" fill="#c0c0c4"/><circle cx="1.5" cy="5" r="0.8" fill="#c0c0c4"/><circle cx="1.5" cy="8.6" r="0.8" fill="#c0c0c4"/></svg>
<svg style="left:29.0px;top:79.9px" width="17" height="12"><rect x="1" y="4.6" width="15" height="2" rx="1" fill="#52b074"/><rect x="4" y="6.6" width="9" height="1.2" fill="#5a4036" opacity=".6"/></svg>
<div class="t" style="left:50.3px;top:79.9px;font-size:11px;color:#ececef">Platform3</div>
<svg style="left:211.7px;top:80.9px" width="3" height="10"><circle cx="1.5" cy="1.4" r="0.8" fill="#c0c0c4"/><circle cx="1.5" cy="5" r="0.8" fill="#c0c0c4"/><circle cx="1.5" cy="8.6" r="0.8" fill="#c0c0c4"/></svg>
<svg style="left:29.0px;top:102.6px" width="17" height="16"><rect x="1" y="1.5" width="15" height="2.5" rx="1" fill="#52b074"/><rect x="2" y="4" width="13" height="3" fill="#3a3a36" opacity=".8"/><rect x="10" y="6" width="5" height="8.5" fill="#2a1414"/><rect x="11.5" y="8" width="2" height="3" fill="#6a2020"/></svg>
<div class="t" style="left:50.3px;top:104.6px;font-size:11px;color:#ececef">Platform4</div>
<svg style="left:211.7px;top:105.6px" width="3" height="10"><circle cx="1.5" cy="1.4" r="0.8" fill="#c0c0c4"/><circle cx="1.5" cy="5" r="0.8" fill="#c0c0c4"/><circle cx="1.5" cy="8.6" r="0.8" fill="#c0c0c4"/></svg>
<svg style="left:32.0px;top:128.4px" width="12" height="14" viewBox="0 0 12 14"><path d="M2 13V6Q2 1.5 6 1.5Q10 1.5 10 6V13" stroke="#8fb8c4" stroke-width="1.3" fill="none"/><path d="M4.5 13V7Q4.5 4.5 6 4.5Q7.5 4.5 7.5 7V13" stroke="#8fb8c4" stroke-width="1" fill="none"/><path d="M1 13.3H4" stroke="#5fc080" stroke-width="1.2"/></svg>
<div class="t" style="left:50.3px;top:129.4px;font-size:11px;color:#ececef">Portal</div>
<svg style="left:211.7px;top:130.4px" width="3" height="10"><circle cx="1.5" cy="1.4" r="0.8" fill="#c0c0c4"/><circle cx="1.5" cy="5" r="0.8" fill="#c0c0c4"/><circle cx="1.5" cy="8.6" r="0.8" fill="#c0c0c4"/></svg>
<svg style="left:30.0px;top:155.2px" width="16" height="10" viewBox="0 0 16 10"><path d="M0.8 5Q8 -1 15.2 5Q8 9.5 0.8 5Z" stroke="#8a8a8e" stroke-width="1" fill="none"/><path d="M5.5 6.5Q8 2.5 10.5 6.5" stroke="#8a8a8e" stroke-width="1" fill="none"/></svg>
<div class="t" style="left:50.3px;top:154.2px;font-size:11px;color:#ececef">Checkpoint</div>
<svg style="left:211.7px;top:155.2px" width="3" height="10"><circle cx="1.5" cy="1.4" r="0.8" fill="#c0c0c4"/><circle cx="1.5" cy="5" r="0.8" fill="#c0c0c4"/><circle cx="1.5" cy="8.6" r="0.8" fill="#c0c0c4"/></svg>
<svg style="left:34.0px;top:177.0px" width="8" height="16" viewBox="0 0 8 16"><path d="M1.5 0.5V15.5M6.5 0.5V15.5M1.5 3H6.5M1.5 6.3H6.5M1.5 9.6H6.5M1.5 12.9H6.5" stroke="#b07a48" stroke-width="1.3"/></svg>
<div class="t" style="left:50.3px;top:179.0px;font-size:11px;color:#ececef">Ladder</div>
<svg style="left:211.7px;top:180.0px" width="3" height="10"><circle cx="1.5" cy="1.4" r="0.8" fill="#c0c0c4"/><circle cx="1.5" cy="5" r="0.8" fill="#c0c0c4"/><circle cx="1.5" cy="8.6" r="0.8" fill="#c0c0c4"/></svg>
<svg style="left:31.0px;top:201.8px" width="14" height="16" viewBox="0 0 14 16"><ellipse cx="7" cy="8" rx="6.3" ry="7.5" fill="#f6d872"/><ellipse cx="7" cy="8" rx="5" ry="6.2" fill="#f3cc57"/><rect x="5.8" y="4" width="1.6" height="7" fill="#d9a838"/></svg>
<div class="t" style="left:50.3px;top:203.8px;font-size:11px;color:#ececef">Coin</div>
<svg style="left:211.7px;top:204.8px" width="3" height="10"><circle cx="1.5" cy="1.4" r="0.8" fill="#c0c0c4"/><circle cx="1.5" cy="5" r="0.8" fill="#c0c0c4"/><circle cx="1.5" cy="8.6" r="0.8" fill="#c0c0c4"/></svg>
<svg style="left:30.0px;top:227.5px" width="16" height="14" viewBox="0 0 16 14"><circle cx="5" cy="5" r="4" fill="#5b8be0"/><circle cx="11.8" cy="8.5" r="3.6" fill="#3a5cc0"/><circle cx="11.8" cy="8.5" r="2" fill="#6a9af0"/><circle cx="5" cy="11.5" r="1.6" fill="#5b8be0"/></svg>
<div class="t" style="left:50.3px;top:228.5px;font-size:11px;color:#ececef">MonsterParticles</div>
<svg style="left:211.7px;top:229.5px" width="3" height="10"><circle cx="1.5" cy="1.4" r="0.8" fill="#c0c0c4"/><circle cx="1.5" cy="5" r="0.8" fill="#c0c0c4"/><circle cx="1.5" cy="8.6" r="0.8" fill="#c0c0c4"/></svg>
<svg style="left:30.0px;top:252.3px" width="16" height="14" viewBox="0 0 16 14"><circle cx="5" cy="5" r="4" fill="#5b8be0"/><circle cx="11.8" cy="8.5" r="3.6" fill="#3a5cc0"/><circle cx="11.8" cy="8.5" r="2" fill="#6a9af0"/><circle cx="5" cy="11.5" r="1.6" fill="#5b8be0"/></svg>
<div class="t" style="left:50.3px;top:253.3px;font-size:11px;color:#ececef">CoinParticles</div>
<svg style="left:211.7px;top:254.3px" width="3" height="10"><circle cx="1.5" cy="1.4" r="0.8" fill="#c0c0c4"/><circle cx="1.5" cy="5" r="0.8" fill="#c0c0c4"/><circle cx="1.5" cy="8.6" r="0.8" fill="#c0c0c4"/></svg>
<svg style="left:30.0px;top:277.1px" width="16" height="14" viewBox="0 0 16 14"><circle cx="5" cy="5" r="4" fill="#5b8be0"/><circle cx="11.8" cy="8.5" r="3.6" fill="#3a5cc0"/><circle cx="11.8" cy="8.5" r="2" fill="#6a9af0"/><circle cx="5" cy="11.5" r="1.6" fill="#5b8be0"/></svg>
<div class="t" style="left:50.3px;top:278.1px;font-size:11px;color:#ececef">DoorParticles</div>
<svg style="left:211.7px;top:279.1px" width="3" height="10"><circle cx="1.5" cy="1.4" r="0.8" fill="#c0c0c4"/><circle cx="1.5" cy="5" r="0.8" fill="#c0c0c4"/><circle cx="1.5" cy="8.6" r="0.8" fill="#c0c0c4"/></svg>
<svg style="left:30.0px;top:301.9px" width="16" height="14" viewBox="0 0 16 14"><circle cx="5" cy="5" r="4" fill="#5b8be0"/><circle cx="11.8" cy="8.5" r="3.6" fill="#3a5cc0"/><circle cx="11.8" cy="8.5" r="2" fill="#6a9af0"/><circle cx="5" cy="11.5" r="1.6" fill="#5b8be0"/></svg>
<div class="t" style="left:50.3px;top:302.9px;font-size:11px;color:#ececef">DustParticle</div>
<svg style="left:211.7px;top:303.9px" width="3" height="10"><circle cx="1.5" cy="1.4" r="0.8" fill="#c0c0c4"/><circle cx="1.5" cy="5" r="0.8" fill="#c0c0c4"/><circle cx="1.5" cy="8.6" r="0.8" fill="#c0c0c4"/></svg>
<svg style="left:30.0px;top:331.7px" width="16" height="4"><path d="M0 2H3M5 2H8M10 2H16" stroke="#9a9aa0" stroke-width="1"/></svg>
<div class="t" style="left:50.3px;top:327.7px;font-size:11px;color:#ececef">Clouds</div>
<svg style="left:211.7px;top:328.7px" width="3" height="10"><circle cx="1.5" cy="1.4" r="0.8" fill="#c0c0c4"/><circle cx="1.5" cy="5" r="0.8" fill="#c0c0c4"/><circle cx="1.5" cy="8.6" r="0.8" fill="#c0c0c4"/></svg>
<svg style="left:30.0px;top:350.4px" width="16" height="16" viewBox="0 0 16 16"><rect x="0" y="0" width="16" height="16" fill="#6fa8dc"/><rect x="1" y="1" width="14" height="14" fill="#cfe2f3"/><text x="2" y="12.5" font-family="Liberation Serif" font-weight="700" font-size="12" fill="#2a4a8a">T</text><text x="9.5" y="13" font-family="Liberation Serif" font-size="6" fill="#2a4a8a">x</text></svg>
<div class="t" style="left:50.3px;top:352.4px;font-size:11px;color:#ececef">ScoreText</div>
<svg style="left:211.7px;top:353.4px" width="3" height="10"><circle cx="1.5" cy="1.4" r="0.8" fill="#c0c0c4"/><circle cx="1.5" cy="5" r="0.8" fill="#c0c0c4"/><circle cx="1.5" cy="8.6" r="0.8" fill="#c0c0c4"/></svg>
<svg style="left:30.0px;top:380.2px" width="16" height="6"><rect x="0" y="2" width="16" height="2.5" fill="#5a4aa8"/><rect x="0" y="1" width="16" height="1" fill="#2a2a5a"/></svg>
<div class="t" style="left:50.3px;top:377.2px;font-size:11px;color:#ececef">BackgroundPlants</div>
<svg style="left:211.7px;top:378.2px" width="3" height="10"><circle cx="1.5" cy="1.4" r="0.8" fill="#c0c0c4"/><circle cx="1.5" cy="5" r="0.8" fill="#c0c0c4"/><circle cx="1.5" cy="8.6" r="0.8" fill="#c0c0c4"/></svg>
<svg style="left:30.0px;top:400.0px" width="16" height="16"><rect x="0" y="0" width="16" height="16" fill="#b82a2a"/></svg>
<div class="t" style="left:50.3px;top:402.0px;font-size:11px;color:#ececef">LeftBoundary</div>
<svg style="left:211.7px;top:403.0px" width="3" height="10"><circle cx="1.5" cy="1.4" r="0.8" fill="#c0c0c4"/><circle cx="1.5" cy="5" r="0.8" fill="#c0c0c4"/><circle cx="1.5" cy="8.6" r="0.8" fill="#c0c0c4"/></svg>
<svg style="left:30.0px;top:424.8px" width="16" height="16"><rect x="0" y="0" width="16" height="16" fill="#b82a2a"/></svg>
<div class="t" style="left:50.3px;top:426.8px;font-size:11px;color:#ececef">RightBoundary</div>
<svg style="left:211.7px;top:427.8px" width="3" height="10"><circle cx="1.5" cy="1.4" r="0.8" fill="#c0c0c4"/><circle cx="1.5" cy="5" r="0.8" fill="#c0c0c4"/><circle cx="1.5" cy="8.6" r="0.8" fill="#c0c0c4"/></svg>
</div>
<div class="a" style="left:512.5px;top:607px;width:217.5px;height:24.5px;background:#4d2bcc;border-radius:6px"></div>
<svg style="left:574px;top:613.5px" width="12" height="12"><path d="M6 0.5V11.5M0.5 6H11.5" stroke="#fff" stroke-width="1.3"/></svg>
<div class="t" style="left:595.5px;top:614.3px;font-size:9.3px;font-weight:700;color:#fff">Add a new object</div>

<!-- yellow highlight -->
<div class="a" style="left:0;top:50px;width:189px;height:585px;border:2px solid #f2c811"></div>
<div class="a" style="left:506px;top:26.5px;width:35px;height:33px;border:2px solid #f2c811"></div>


<!-- tooltip -->
<div class="a" style="left:477px;top:63.5px;width:91px;height:16.5px;background:rgba(98,98,104,.88);border-radius:4px"></div>
<div class="t" style="left:483.3px;top:68px;font-size:7.75px;color:#ececef">Close Properties Panel</div>
</body></html>
